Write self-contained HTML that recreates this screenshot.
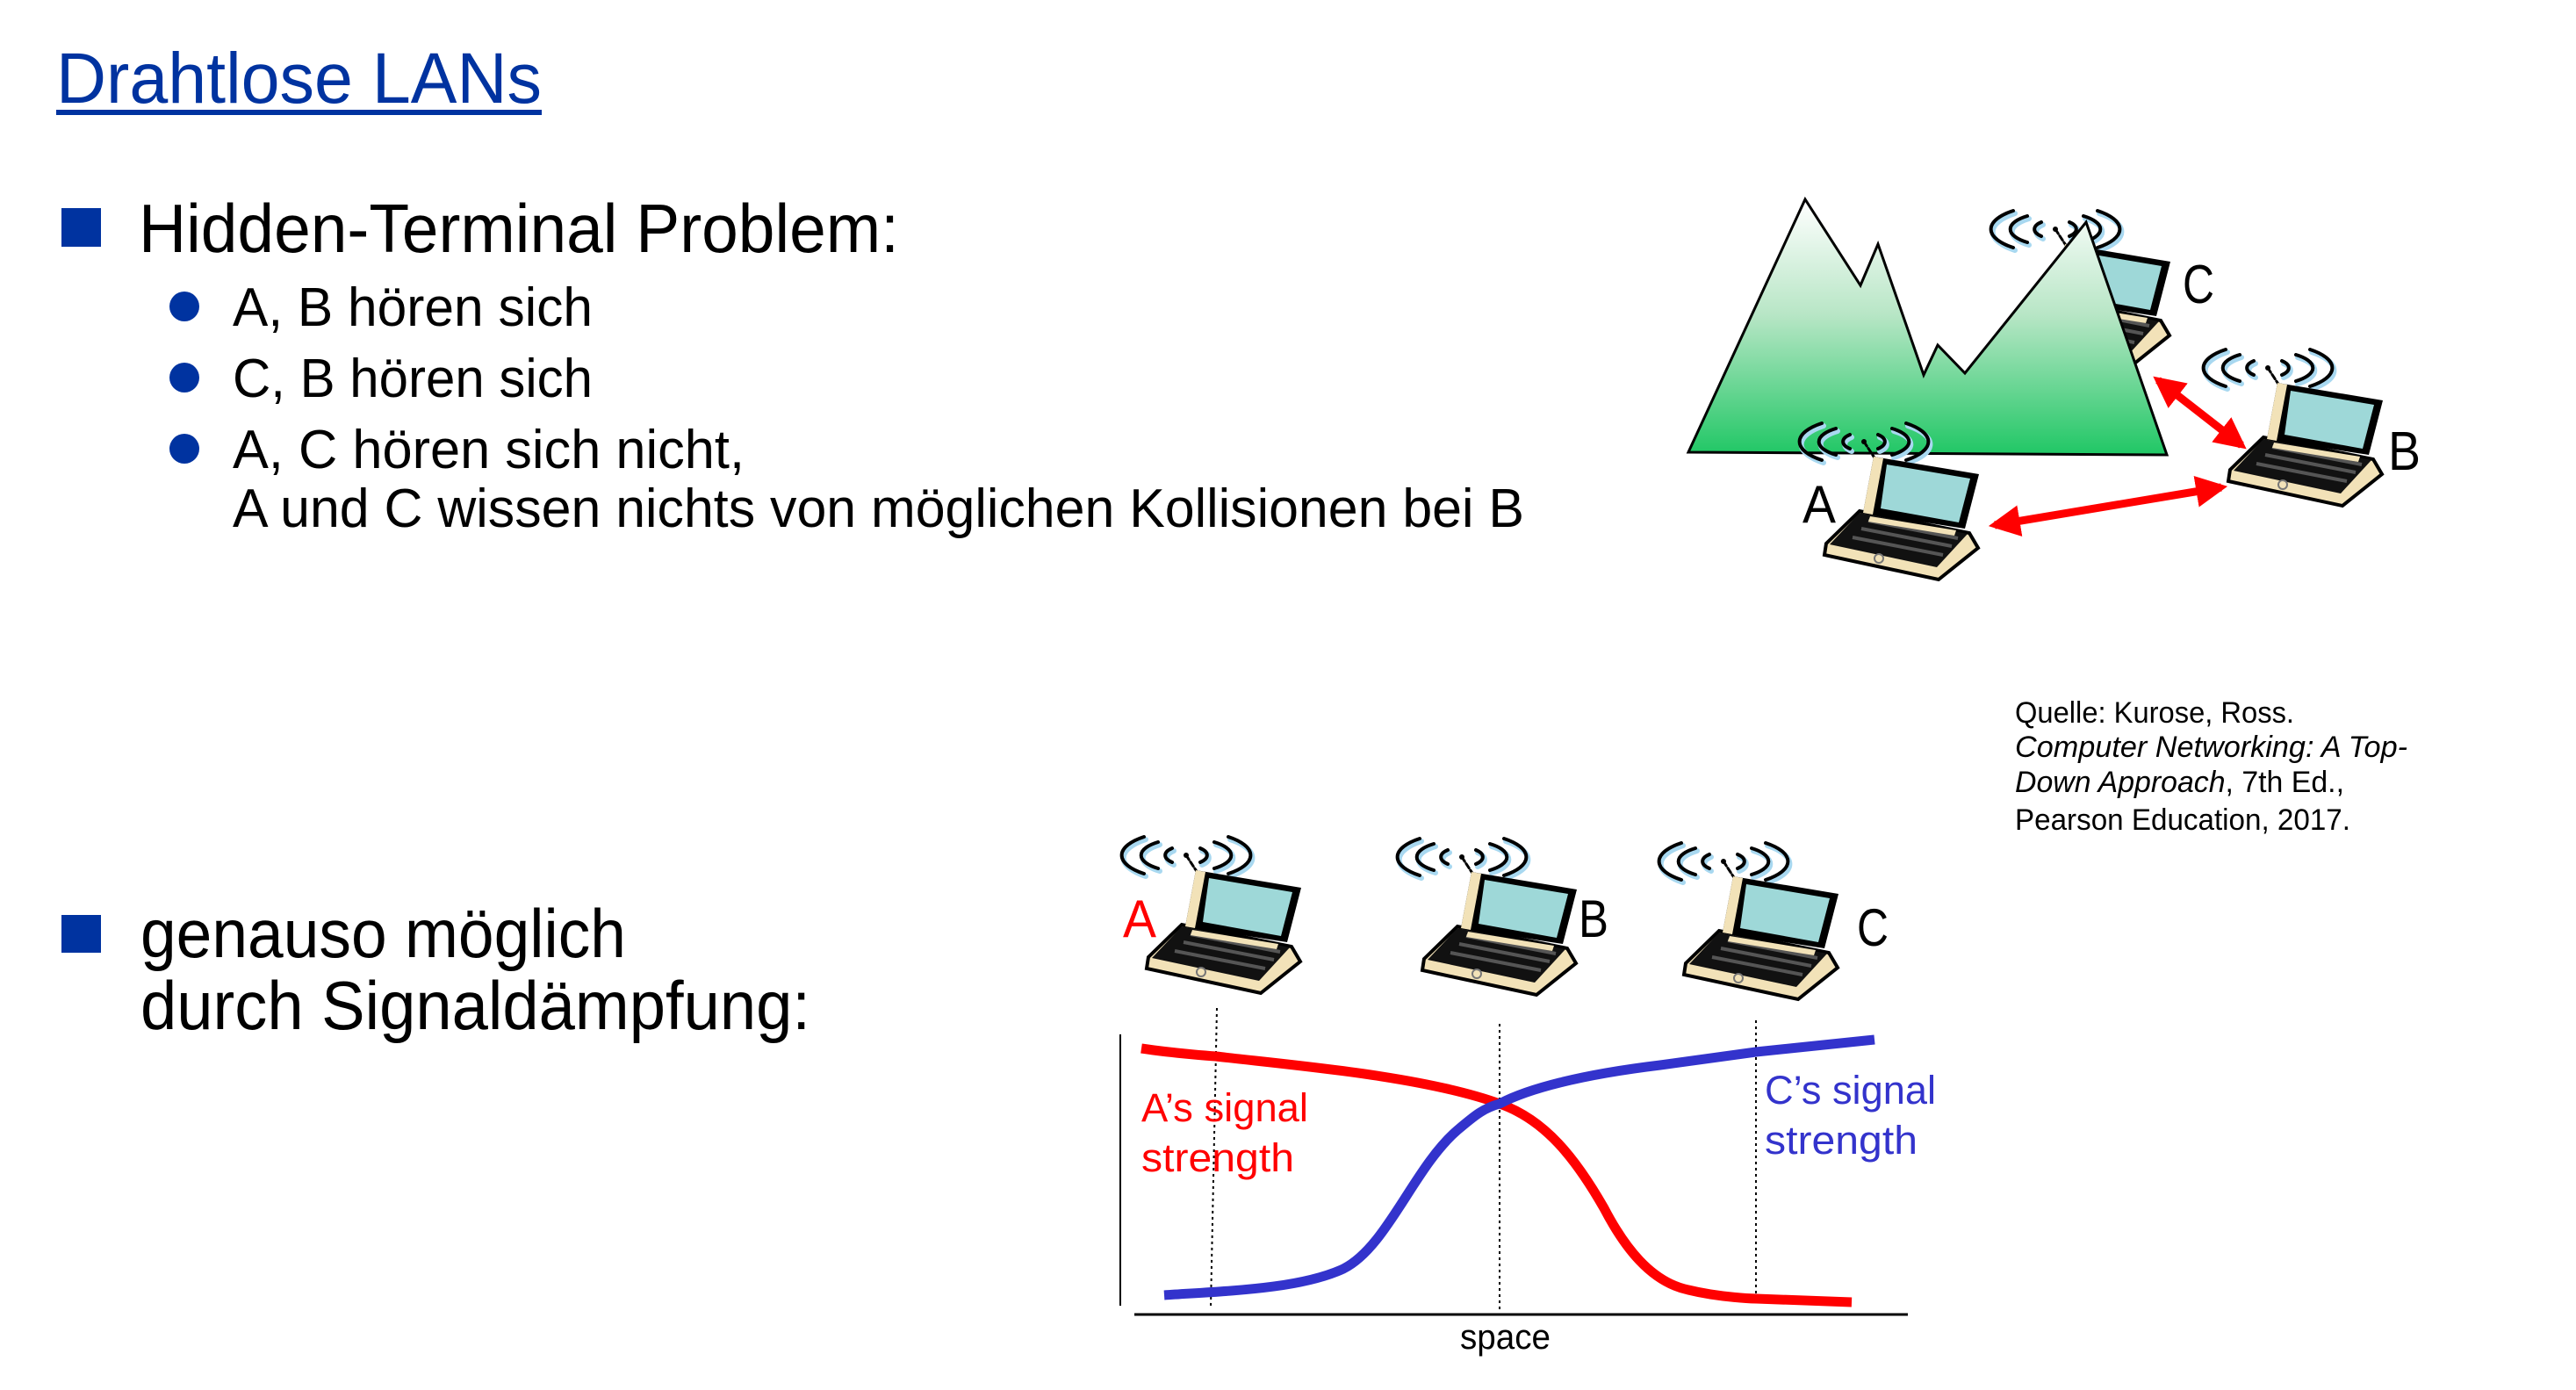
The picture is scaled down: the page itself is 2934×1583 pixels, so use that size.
<!DOCTYPE html>
<html><head><meta charset="utf-8"><style>
html,body{margin:0;padding:0;background:#fff;}
svg{display:block;}
text{font-family:"Liberation Sans",sans-serif;}
</style></head><body>
<svg width="2934" height="1583" viewBox="0 0 2934 1583" xmlns="http://www.w3.org/2000/svg">
<defs>
<linearGradient id="mg" x1="0" y1="0" x2="0" y2="1">
<stop offset="0" stop-color="#ffffff"/><stop offset="0.45" stop-color="#b8e6c6"/><stop offset="1" stop-color="#20c765"/>
</linearGradient>
<marker id="ah" viewBox="0 0 10 10" refX="8" refY="5" markerWidth="4" markerHeight="4" orient="auto-start-reverse">
<path d="M0,0 L10,5 L0,10 z" fill="#ff0000"/></marker>
<g id="lap">
<g fill="none" stroke="#a8d8f0" stroke-width="6" stroke-linecap="round" transform="translate(2,3)">
<path d="M27,8 A75 28 0 0 0 27,50"/><path d="M123,8 A75 28 0 0 1 123,50"/>
<path d="M43,14 A50 19 0 0 0 43,44"/><path d="M107,14 A50 19 0 0 1 107,44"/>
<path d="M59,21 A25 11 0 0 0 59,37"/><path d="M91,21 A25 11 0 0 1 91,37"/>
</g>
<g fill="none" stroke="#000" stroke-width="4" stroke-linecap="round">
<path d="M27,8 A75 28 0 0 0 27,50"/><path d="M123,8 A75 28 0 0 1 123,50"/>
<path d="M43,14 A50 19 0 0 0 43,44"/><path d="M107,14 A50 19 0 0 1 107,44"/>
<path d="M59,21 A25 11 0 0 0 59,37"/><path d="M91,21 A25 11 0 0 1 91,37"/>
<path d="M75,29 L90,52" stroke-width="3" stroke-dasharray="6 3"/>
</g>
<circle cx="75" cy="29" r="3" fill="#000"/>
<path d="M32,145 L70,108 L195,133 L205,150 L160,186 L30,158 Z" fill="#f2e2b8" stroke="#000" stroke-width="4"/>
<path d="M36,146 L70,110 L193,134 L158,172 Z" fill="#111"/>
<path d="M62,138 L165,158 M72,128 L175,148 M80,119 L182,139" stroke="#555" stroke-width="4"/>
<path d="M86,46 L206,66 L190,128 L74,110 Z" fill="#000"/>
<path d="M86,46 L97,48 L85,112 L74,110 Z" fill="#f2e2b8"/>
<path d="M101,55 L196,71 L183,121 L94,105 Z" fill="#9ed8d8"/>
<path d="M82,114 L180,130 L178,136 L80,120 Z" fill="#f2e2b8"/>
<circle cx="92" cy="162" r="5" fill="none" stroke="#777" stroke-width="2"/>
</g>
</defs>

<text x="64" y="117" font-size="82" fill="#0033a0" textLength="553" lengthAdjust="spacingAndGlyphs">Drahtlose LANs</text>
<rect x="64" y="125" width="553" height="6" fill="#0033a0"/>

<rect x="70" y="237" width="45" height="44" fill="#0033a0"/>
<text x="158" y="287" font-size="78" fill="#000" textLength="866" lengthAdjust="spacingAndGlyphs">Hidden-Terminal Problem:</text>
<circle cx="210" cy="349" r="17" fill="#0033a0"/>
<circle cx="210" cy="430" r="17" fill="#0033a0"/>
<circle cx="210" cy="511" r="17" fill="#0033a0"/>
<g font-size="62" fill="#000">
<text x="265" y="371" textLength="410" lengthAdjust="spacingAndGlyphs">A, B hören sich</text>
<text x="265" y="452" textLength="410" lengthAdjust="spacingAndGlyphs">C, B hören sich</text>
<text x="265" y="533" textLength="583" lengthAdjust="spacingAndGlyphs">A, C hören sich nicht,</text>
<text x="265" y="600" textLength="1471" lengthAdjust="spacingAndGlyphs">A und C wissen nichts von möglichen Kollisionen bei B</text>
</g>

<rect x="70" y="1042" width="45" height="43" fill="#0033a0"/>
<text x="160" y="1090" font-size="78" textLength="553" lengthAdjust="spacingAndGlyphs">genauso möglich</text>
<text x="160" y="1172" font-size="78" textLength="763" lengthAdjust="spacingAndGlyphs">durch Signaldämpfung:</text>

<g font-size="34" fill="#000">
<text x="2295" y="823" textLength="318" lengthAdjust="spacingAndGlyphs">Quelle: Kurose, Ross.</text>
<text x="2295" y="862" font-style="italic" textLength="447" lengthAdjust="spacingAndGlyphs">Computer Networking: A Top-</text>
<text x="2295" y="902" textLength="375" lengthAdjust="spacingAndGlyphs"><tspan font-style="italic">Down Approach</tspan>, 7th Ed.,</text>
<text x="2295" y="945" textLength="382" lengthAdjust="spacingAndGlyphs">Pearson Education, 2017.</text>
</g>

<use href="#lap" x="2266" y="232"/>
<path d="M1923,515 L2056,227 L2119,325 L2139,278 L2191,427 L2207,393 L2238,425 L2376,253 L2468,518 Z" fill="url(#mg)" stroke="#000" stroke-width="3"/>
<use href="#lap" x="2048" y="474"/>
<use href="#lap" x="2508" y="390"/>
<line x1="2458" y1="433" x2="2553" y2="507" stroke="#ff0000" stroke-width="9" marker-start="url(#ah)" marker-end="url(#ah)"/>
<line x1="2272" y1="598" x2="2530" y2="555" stroke="#ff0000" stroke-width="9" marker-start="url(#ah)" marker-end="url(#ah)"/>
<text x="2486" y="345" font-size="62" textLength="36" lengthAdjust="spacingAndGlyphs">C</text>
<text x="2720" y="535" font-size="62" textLength="37" lengthAdjust="spacingAndGlyphs">B</text>
<text x="2053" y="595" font-size="60" textLength="38" lengthAdjust="spacingAndGlyphs">A</text>

<use href="#lap" x="1276" y="945"/>
<use href="#lap" x="1590" y="947"/>
<use href="#lap" x="1888" y="952"/>
<text x="1279" y="1067" font-size="60" fill="#ff0000" textLength="38" lengthAdjust="spacingAndGlyphs">A</text>
<text x="1798" y="1067" font-size="60" textLength="34" lengthAdjust="spacingAndGlyphs">B</text>
<text x="2115" y="1077" font-size="60" textLength="36" lengthAdjust="spacingAndGlyphs">C</text>

<line x1="1276" y1="1178" x2="1276" y2="1487" stroke="#000" stroke-width="2"/>
<line x1="1292" y1="1497" x2="2173" y2="1497" stroke="#000" stroke-width="3"/>
<g stroke="#000" stroke-width="2" stroke-dasharray="3 4">
<line x1="1386" y1="1148" x2="1379" y2="1489"/>
<line x1="1708" y1="1166" x2="1708" y2="1493"/>
<line x1="2000" y1="1162" x2="2000" y2="1481"/>
</g>
<path d="M1300,1194 C1340,1200 1385,1203 1385,1203 C1470,1213 1620,1225 1708,1257 C1760,1275 1795,1320 1827,1376 C1850,1420 1880,1460 1923,1469 C1960,1478 2000,1479 2000,1479 L2109,1483" fill="none" stroke="#ff0000" stroke-width="11"/>
<path d="M1326,1475 C1400,1470 1480,1468 1530,1445 C1580,1420 1610,1330 1660,1287 C1680,1270 1690,1262 1708,1257 C1740,1240 1800,1224 1891,1213 C1950,1205 2000,1198 2000,1198 L2135,1184" fill="none" stroke="#3333cc" stroke-width="11"/>
<g font-size="45" fill="#ff0000">
<text x="1300" y="1277" textLength="190" lengthAdjust="spacingAndGlyphs">A’s signal</text>
<text x="1300" y="1334" textLength="174" lengthAdjust="spacingAndGlyphs">strength</text>
</g>
<g font-size="45" fill="#3333cc">
<text x="2010" y="1257" textLength="195" lengthAdjust="spacingAndGlyphs">C’s signal</text>
<text x="2010" y="1314" textLength="174" lengthAdjust="spacingAndGlyphs">strength</text>
</g>
<text x="1663" y="1536" font-size="40" textLength="103" lengthAdjust="spacingAndGlyphs">space</text>
</svg>
</body></html>
